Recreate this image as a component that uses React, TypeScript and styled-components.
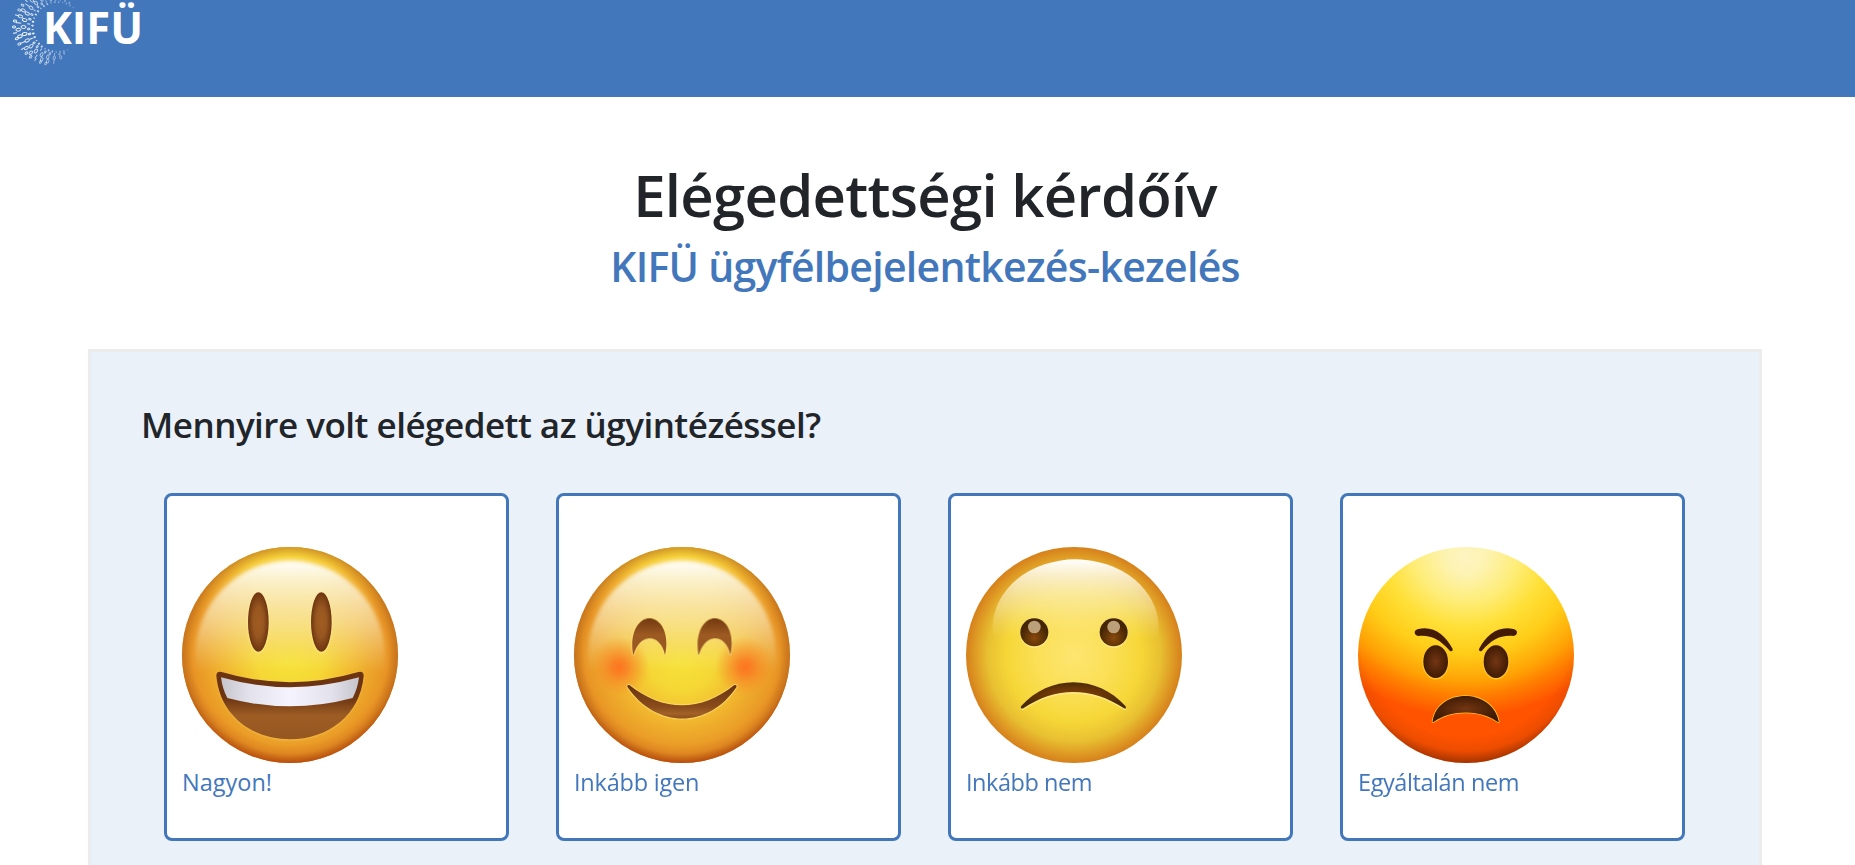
import React from "react";
import styled, { createGlobalStyle } from "styled-components";

const blue = "#4377bb";

const GlobalStyle = createGlobalStyle`
  * { box-sizing: border-box; }
  html, body { margin: 0; height: 100%; overflow: hidden; background: #fff; }
  body { font-family: "Segoe UI", "Open Sans", "Noto Sans", sans-serif; color: #212529; }
`;

const Header = styled.header`
  height: 97px;
  background: ${blue};
`;

const Logo = styled.svg`
  display: block;
  width: 160px;
  height: 80px;
  overflow: visible;
`;

const Heading = styled.div`
  display: flex;
  flex-direction: column;
  align-items: center;
  height: 252px;
  padding: 62px 5px 0 0;
  text-align: center;
  white-space: nowrap;
`;

const Title = styled.h1`
  margin: 0;
  font-size: 58px;
  font-weight: 600;
  line-height: 72px;
  letter-spacing: -0.7px;
`;

const Subtitle = styled.h2`
  margin: 10px 0 0;
  color: ${blue};
  font-size: 41px;
  font-weight: 600;
  line-height: 50px;
  letter-spacing: -0.72px;
`;

const Panel = styled.main`
  width: 1674px;
  height: 516px;
  margin-left: 88px;
  padding: 51px 50px 0;
  border: 3px solid #ececec;
  border-bottom: 0;
  background: #eaf1f9;
`;

const Question = styled.h3`
  margin: 0 0 47px;
  font-size: 35px;
  font-weight: 600;
  line-height: 43px;
  white-space: nowrap;
  letter-spacing: -0.5px;
`;

const Answers = styled.div`
  display: flex;
  gap: 47px;
  margin-left: 23px;
`;

const Card = styled.button`
  display: flex;
  flex-direction: column;
  align-items: flex-start;
  flex: none;
  width: 345px;
  height: 348px;
  padding: 51px 15px 0;
  border: 3px solid ${blue};
  border-radius: 8px;
  background: #fff;
  color: ${blue};
  font-family: inherit;
`;

const Face = styled.svg`
  display: block;
  width: 216px;
  height: 216px;
`;

const Label = styled.span<{ $spacing: number }>`
  margin-top: 1px;
  font-size: 23.5px;
  line-height: 36px;
  letter-spacing: ${(p) => p.$spacing}px;
  white-space: nowrap;
`;

/* Ring of zeros and ones around the left side of the wordmark. */
function BinaryRing() {
  const marks: React.ReactNode[] = [];
  const rings = [
    { r: 25, s: 0.8, step: 9, from: 66, to: 312 },
    { r: 29, s: 1.2, step: 10, from: 76, to: 300 },
    { r: 34, s: 2.2, step: 12, from: 84, to: 285 },
    { r: 39.5, s: 2.1, step: 10, from: 96, to: 262 },
    { r: 43.5, s: 1.5, step: 8, from: 108, to: 246 },
  ];
  rings.forEach(({ r, s, step, from, to }, ring) => {
    for (let i = 0; from + i * step <= to; i++) {
      const deg = from + i * step;
      const fade = Math.max(0.3, 1 - Math.abs(deg - 175) / 150);
      const size = s * (0.5 + fade * 0.5);
      const rr = r - Math.abs(deg - 180) * 0.018 * ring;
      const a = (deg * Math.PI) / 180;
      const x = 57.5 + rr * Math.cos(a);
      const y = 27 + rr * Math.sin(a);
      const turn = `rotate(${deg} ${x} ${y})`;
      const zero = (i * 7 + ring * 5 + i * ring) % 3 !== 0;
      marks.push(
        zero ? (
          <ellipse key={`${ring}-${i}`} cx={x} cy={y} rx={size * 1.15} ry={size * 0.7} transform={turn} opacity={fade} />
        ) : (
          <line key={`${ring}-${i}`} x1={x - size * 1.3} x2={x + size * 1.3} y1={y} y2={y} transform={turn} opacity={fade} />
        )
      );
    }
  });
  return <g fill="none" stroke="#fff" strokeWidth="0.95">{marks}</g>;
}

function GoldenBase({ id, glossRadius }: { id: string; glossRadius: number }) {
  return (
    <>
      <defs>
        <radialGradient id={`${id}b`} gradientUnits="userSpaceOnUse" cx="324" cy="330" r="340">
          <stop offset="0" stopColor="#f7e337" />
          <stop offset=".3" stopColor="#f5d735" />
          <stop offset=".58" stopColor="#f1b52e" />
          <stop offset=".85" stopColor="#e89525" />
          <stop offset="1" stopColor="#df8420" />
        </radialGradient>
        <radialGradient id={`${id}t`} gradientUnits="userSpaceOnUse" cx="324" cy="10" r="340">
          <stop offset="0" stopColor="#f7d538" />
          <stop offset=".4" stopColor="#f5cb35" stopOpacity=".9" />
          <stop offset="1" stopColor="#f3b52d" stopOpacity="0" />
        </radialGradient>
        <radialGradient id={`${id}e`} gradientUnits="userSpaceOnUse" cx="324" cy="296" r="354">
          <stop offset=".84" stopColor="#c25a12" stopOpacity="0" />
          <stop offset=".92" stopColor="#c25a12" stopOpacity=".25" />
          <stop offset="1" stopColor="#b8460a" stopOpacity=".95" />
        </radialGradient>
        <radialGradient id={`${id}r`} gradientUnits="userSpaceOnUse" cx="324" cy="324" r="324">
          <stop offset=".91" stopColor="#b9781e" stopOpacity="0" />
          <stop offset="1" stopColor="#b9701c" stopOpacity=".6" />
        </radialGradient>
        <linearGradient id={`${id}g`} gradientUnits="userSpaceOnUse" x1="0" y1="35" x2="0" y2="375">
          <stop offset="0" stopColor="#fff" />
          <stop offset=".2" stopColor="#fcf7e4" stopOpacity=".84" />
          <stop offset=".6" stopColor="#fbf2cc" stopOpacity=".5" />
          <stop offset="1" stopColor="#faf0b0" stopOpacity="0" />
        </linearGradient>
        <filter id={`${id}f`}><feGaussianBlur stdDeviation="6" /></filter>
      </defs>
      <circle cx="324" cy="324" r="324" fill={`url(#${id}b)`} />
      <circle cx="324" cy="324" r="324" fill={`url(#${id}t)`} />
      <circle cx="324" cy="324" r="324" fill={`url(#${id}r)`} />
      <circle cx="324" cy="324" r="324" fill={`url(#${id}e)`} />
      <ellipse cx="324" cy="332" rx={glossRadius} ry="292" fill={`url(#${id}g)`} filter={`url(#${id}f)`} />
    </>
  );
}

function GrinFace() {
  return (
    <Face viewBox="0 0 648 648" aria-hidden="true">
      <GoldenBase id="grin" glossRadius={286} />
      <defs>
        <radialGradient id="grinEye">
          <stop offset="0" stopColor="#a05d22" />
          <stop offset=".5" stopColor="#985720" />
          <stop offset="1" stopColor="#6e3510" />
        </radialGradient>
        <linearGradient id="grinTeeth" x1="0" x2="1" y1="0" y2="0">
          <stop offset="0" stopColor="#c5c4cb" />
          <stop offset=".2" stopColor="#e3e2ec" />
          <stop offset=".5" stopColor="#f4f3fe" />
          <stop offset=".8" stopColor="#e3e2ec" />
          <stop offset="1" stopColor="#c5c4cb" />
        </linearGradient>
        <linearGradient id="grinMouth" x1="0" x2="0" y1="0" y2="1">
          <stop offset="0" stopColor="#6c3411" />
          <stop offset=".38" stopColor="#6c3411" />
          <stop offset=".65" stopColor="#9d5d24" />
          <stop offset="1" stopColor="#965620" />
        </linearGradient>
        <filter id="grinGlow" x="-10%" y="-10%" width="120%" height="120%"><feGaussianBlur stdDeviation="2.5" /></filter>
      </defs>
      <g fill="#fff29a" opacity=".7" filter="url(#grinGlow)">
        <ellipse cx="229" cy="228" rx="32" ry="90" />
        <ellipse cx="418" cy="228" rx="32" ry="90" />
      </g>
      <ellipse cx="229" cy="225" rx="31" ry="89" fill="url(#grinEye)" />
      <ellipse cx="418" cy="225" rx="31" ry="89" fill="url(#grinEye)" />
      <path d="M103 388 Q102 371 119 375 Q324 436 529 375 Q546 371 545 388 C534 505 440 580 324 580 C208 580 114 505 103 388Z" fill="#f7c960" opacity=".6" filter="url(#grinGlow)" />
      <path d="M103 388 Q102 371 119 375 Q324 436 529 375 Q546 371 545 388 C534 504 440 577 324 577 C208 577 114 504 103 388Z" fill="url(#grinMouth)" />
      <path d="M117 391 Q324 450 531 391 Q527 425 512 453 Q324 503 136 453 Q121 425 117 391Z" fill="url(#grinTeeth)" />
    </Face>
  );
}

function SmileFace() {
  const eye = "M177 322 C166 255 195 214 226 214 C261 214 288 260 273 324 C259 257 197 258 179 323Z";
  const mouth = "M161 421 Q157 413 166 414 C266 495 382 495 481 414 Q490 413 487 421 C404 546 246 546 161 421Z";
  return (
    <Face viewBox="0 0 648 648" aria-hidden="true">
      <GoldenBase id="smile" glossRadius={284} />
      <defs>
        <radialGradient id="smileCheek">
          <stop offset="0" stopColor="#fd7420" />
          <stop offset=".25" stopColor="#fa7b23" stopOpacity=".85" />
          <stop offset=".65" stopColor="#f68e28" stopOpacity=".45" />
          <stop offset="1" stopColor="#f4a12a" stopOpacity="0" />
        </radialGradient>
        <linearGradient id="smileBrown" x1="0" x2="0" y1="0" y2="1">
          <stop offset="0" stopColor="#733910" />
          <stop offset=".45" stopColor="#9d5a22" />
          <stop offset="1" stopColor="#985823" />
        </linearGradient>
        <linearGradient id="smileMouth" x1="0" x2="0" y1="0" y2="1">
          <stop offset="0" stopColor="#693310" />
          <stop offset=".65" stopColor="#8b4c1c" />
          <stop offset=".85" stopColor="#a26127" />
          <stop offset="1" stopColor="#8e4e1c" />
        </linearGradient>
        <filter id="smileGlow"><feGaussianBlur stdDeviation="2" /></filter>
      </defs>
      <circle cx="135" cy="360" r="92" fill="url(#smileCheek)" />
      <circle cx="514" cy="360" r="92" fill="url(#smileCheek)" />
      <g fill="none" stroke="#fce680" strokeWidth="5" opacity=".75" filter="url(#smileGlow)">
        <path d={eye} />
        <path d={eye} transform="translate(196 0)" />
        <path d={mouth} />
      </g>
      <path d={eye} fill="url(#smileBrown)" />
      <path d={eye} transform="translate(196 0)" fill="url(#smileBrown)" />
      <path d={mouth} fill="url(#smileMouth)" />
    </Face>
  );
}

function FrownFace() {
  const mouth = "M165 478 C250 382 394 382 479 478 Q482 488 474 484 C375 419 269 419 172 484 Q162 488 165 478Z";
  return (
    <Face viewBox="0 0 648 648" aria-hidden="true">
      <defs>
        <radialGradient id="frownBase" gradientUnits="userSpaceOnUse" cx="324" cy="324" r="324">
          <stop offset="0" stopColor="#fde671" />
          <stop offset=".35" stopColor="#fbdf56" />
          <stop offset=".62" stopColor="#f6d738" />
          <stop offset=".8" stopColor="#e8c031" />
          <stop offset=".9" stopColor="#e0a026" />
          <stop offset="1" stopColor="#d6801b" />
        </radialGradient>
        <linearGradient id="frownGloss" x1="0" x2="0" y1="0" y2="1">
          <stop offset="0" stopColor="#fff" />
          <stop offset=".12" stopColor="#fdf6e2" stopOpacity=".85" />
          <stop offset=".35" stopColor="#fbf0bd" stopOpacity=".5" />
          <stop offset=".58" stopColor="#fae890" stopOpacity="0" />
        </linearGradient>
        <radialGradient id="frownEye" cy=".7">
          <stop offset="0" stopColor="#88490c" />
          <stop offset="1" stopColor="#452604" />
        </radialGradient>
        <radialGradient id="frownMouth">
          <stop offset="0" stopColor="#8b430b" />
          <stop offset="1" stopColor="#4d2b05" />
        </radialGradient>
        <filter id="frownSoft"><feGaussianBlur stdDeviation="1.5" /></filter>
      </defs>
      <circle cx="324" cy="324" r="324" fill="url(#frownBase)" />
      <ellipse cx="329" cy="242" rx="249" ry="205" fill="url(#frownGloss)" filter="url(#frownSoft)" />
      <g fill="#fff09e" opacity=".8" filter="url(#frownSoft)">
        <circle cx="205" cy="260" r="42" />
        <circle cx="443" cy="260" r="42" />
        <path d={mouth} transform="translate(0 4)" />
      </g>
      <circle cx="205" cy="256" r="42" fill="url(#frownEye)" />
      <circle cx="443" cy="256" r="42" fill="url(#frownEye)" />
      <circle cx="205" cy="240" r="19" fill="#bca07a" />
      <circle cx="443" cy="240" r="19" fill="#bca07a" />
      <path d={mouth} fill="url(#frownMouth)" />
    </Face>
  );
}

function AngryFace() {
  const brow = "M181 246 C227 236 261 263 284 306 Q285 315 276 312 C245 278 222 264 181 267 Q170 265 170 256 Q171 248 181 246Z";
  const mouth = "M224 522 C240 422 402 422 422 522 Q423 527 418 524 C365 487 280 487 228 524 Q223 527 224 522Z";
  return (
    <Face viewBox="0 0 648 648" aria-hidden="true">
      <defs>
        <radialGradient id="angryBase" gradientUnits="userSpaceOnUse" cx="324" cy="-77" r="587" fx="324" fy="35">
          <stop offset="0" stopColor="#fdf4c1" />
          <stop offset=".1" stopColor="#fdf3b2" />
          <stop offset=".27" stopColor="#feed78" />
          <stop offset=".43" stopColor="#ffe038" />
          <stop offset=".6" stopColor="#ffcd18" />
          <stop offset=".77" stopColor="#ffa305" />
          <stop offset=".87" stopColor="#ff7d00" />
          <stop offset="1" stopColor="#ff5300" />
        </radialGradient>
        <radialGradient id="angryShade" gradientUnits="userSpaceOnUse" cx="324" cy="250" r="398">
          <stop offset=".8" stopColor="#7a2500" stopOpacity="0" />
          <stop offset=".91" stopColor="#7a2500" stopOpacity=".14" />
          <stop offset="1" stopColor="#7a2500" stopOpacity=".68" />
        </radialGradient>
        <radialGradient id="angryBrown">
          <stop offset="0" stopColor="#733613" />
          <stop offset="1" stopColor="#401b03" />
        </radialGradient>
        <filter id="angryGlow"><feGaussianBlur stdDeviation="1.4" /></filter>
      </defs>
      <circle cx="324" cy="324" r="324" fill="url(#angryBase)" />
      <circle cx="324" cy="324" r="324" fill="url(#angryShade)" />
      <g fill="none" stroke="#fdc52a" strokeWidth="5" filter="url(#angryGlow)">
        <ellipse cx="233" cy="345" rx="38" ry="50" />
        <ellipse cx="414" cy="345" rx="38" ry="50" />
        <path d={mouth} />
      </g>
      <path d={brow} fill="#431b02" />
      <path d={brow} transform="translate(647 0) scale(-1 1)" fill="#431b02" />
      <ellipse cx="233" cy="344" rx="37" ry="49" fill="url(#angryBrown)" />
      <ellipse cx="414" cy="344" rx="37" ry="49" fill="url(#angryBrown)" />
      <path d={mouth} fill="url(#angryBrown)" />
    </Face>
  );
}

const answers = [
  { label: "Nagyon!", face: <GrinFace />, spacing: 0 },
  { label: "Inkább igen", face: <SmileFace />, spacing: -0.22 },
  { label: "Inkább nem", face: <FrownFace />, spacing: -0.45 },
  { label: "Egyáltalán nem", face: <AngryFace />, spacing: -0.42 },
];

export default function App() {
  return (
    <>
      <GlobalStyle />
      <Header>
        <Logo viewBox="0 0 160 80" aria-label="KIFÜ">
          <BinaryRing />
          <text x="43" y="43.8" fill="#fff" fontFamily="Open Sans" fontWeight="700" fontSize="44.5" textLength="100" lengthAdjust="spacingAndGlyphs">KIFÜ</text>
        </Logo>
      </Header>
      <Heading>
        <Title>Elégedettségi kérdőív</Title>
        <Subtitle>KIFÜ ügyfélbejelentkezés-kezelés</Subtitle>
      </Heading>
      <Panel>
        <Question>Mennyire volt elégedett az ügyintézéssel?</Question>
        <Answers>
          {answers.map((a) => (
            <Card key={a.label} type="button">
              {a.face}
              <Label $spacing={a.spacing}>{a.label}</Label>
            </Card>
          ))}
        </Answers>
      </Panel>
    </>
  );
}
